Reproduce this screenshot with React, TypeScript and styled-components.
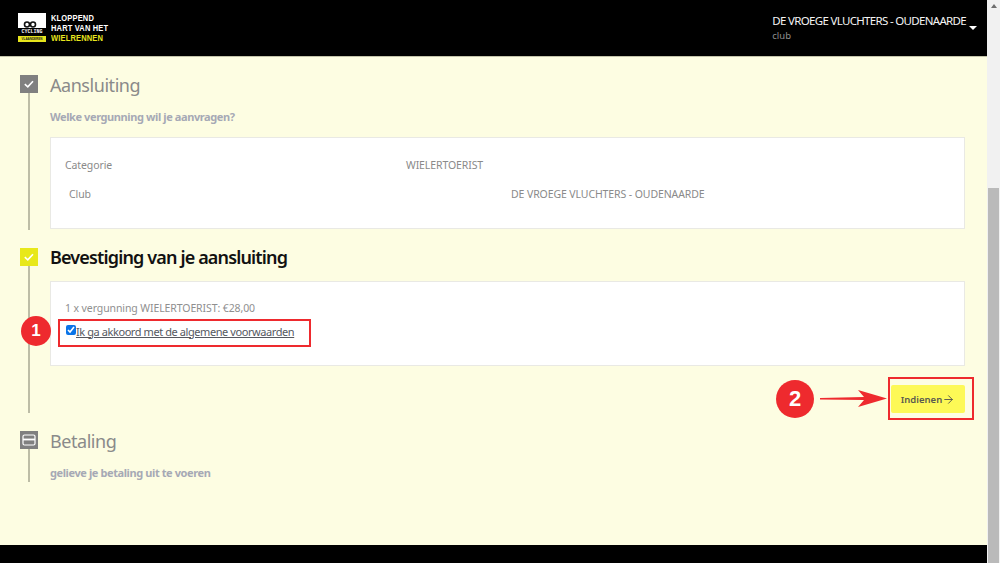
import React from 'react';
import styled, { createGlobalStyle } from 'styled-components';
import { ArrowRight } from 'lucide-react';

const GlobalStyle = createGlobalStyle`
  html, body {
    margin: 0;
    padding: 0;
    height: 100%;
    overflow: hidden;
    background: #fdfde2;
    font-family: "Noto Sans", "Open Sans", sans-serif;
  }
`;

const CheckIcon = () => (
  <svg width="12" height="12" viewBox="0 0 12 12" fill="none">
    <path d="M1.8 6.2 L4.8 8.8 L10 3.2" stroke="#fff" strokeWidth="1.6" />
  </svg>
);

const CardIcon = () => (
  <svg width="14" height="12" viewBox="0 0 14 12" fill="none">
    <rect x="1" y="1" width="12" height="10" rx="1.5" stroke="#fff" strokeWidth="1.2" />
    <rect x="1" y="4.6" width="12" height="1.8" fill="#fff" />
  </svg>
);

const ChainIcon = () => (
  <svg width="14" height="7" viewBox="0 0 14 7" fill="none">
    <circle cx="4" cy="3.5" r="2.5" stroke="#111" strokeWidth="1.6" />
    <circle cx="10" cy="3.5" r="2.5" stroke="#111" strokeWidth="1.6" />
  </svg>
);

const App = () => {
  return (
    <Page>
      <GlobalStyle />
      <Main>
        <Header>
          <Brand>
            <LogoMark>
              <LogoWhite><ChainIcon /></LogoWhite>
              <LogoCycling>CYCLING</LogoCycling>
              <LogoStrip>VLAANDEREN</LogoStrip>
            </LogoMark>
            <Slogan>
              <span>KLOPPEND</span>
              <span>HART VAN HET</span>
              <SloganAccent>WIELRENNEN</SloganAccent>
            </Slogan>
          </Brand>
          <Account>
            <AccountText>
              <AccountName>DE VROEGE VLUCHTERS - OUDENAARDE</AccountName>
              <AccountRole>club</AccountRole>
            </AccountText>
            <Caret />
          </Account>
        </Header>

        <Content>
          <Step $height={173}>
            <Rail>
              <Marker><CheckIcon /></Marker>
              <RailLine />
            </Rail>
            <StepBody>
              <StepTitle>Aansluiting</StepTitle>
              <StepHint>Welke vergunning wil je aanvragen?</StepHint>
              <Card $height={92} $gap={12}>
                <InfoRow $top={19} $left={15} $labelWidth={341}>
                  <span>Categorie</span>
                  <span>WIELERTOERIST</span>
                </InfoRow>
                <InfoRow $top={12} $left={19} $labelWidth={442}>
                  <span>Club</span>
                  <span>DE VROEGE VLUCHTERS - OUDENAARDE</span>
                </InfoRow>
              </Card>
            </StepBody>
          </Step>

          <Step $height={183}>
            <Rail>
              <Marker $active><CheckIcon /></Marker>
              <RailLine />
            </Rail>
            <StepBody>
              <StepTitle $active>Bevestiging van je aansluiting</StepTitle>
              <Card $height={85} $gap={14}>
                <Price>1 x vergunning WIELERTOERIST: €28,00</Price>
                <AgreeRow>
                  <AgreeBox type="checkbox" defaultChecked />
                  <AgreeLink href="#">Ik ga akkoord met de algemene voorwaarden</AgreeLink>
                </AgreeRow>
              </Card>
              <Actions>
                <SubmitButton>Indienen<ArrowRight size={13} strokeWidth={1.8} /></SubmitButton>
              </Actions>
            </StepBody>
          </Step>

          <Step $height={69}>
            <Rail>
              <Marker><CardIcon /></Marker>
              <RailLine />
            </Rail>
            <StepBody>
              <StepTitle>Betaling</StepTitle>
              <StepHint>gelieve je betaling uit te voeren</StepHint>
            </StepBody>
          </Step>
        </Content>

        <Footer />

        <HighlightBox $x={58} $y={319} $w={253} $h={28} />
        <HighlightBox $x={888} $y={377} $w={86} $h={43} />
        <Badge $x={21} $y={316} $size={30} $font={17}>1</Badge>
        <Badge $x={776} $y={380} $size={38} $font={22}>2</Badge>
        <ArrowMark width="68" height="20" viewBox="0 0 68 20">
          <path d="M0 9 L44 8 L38 1 L67 9.5 L38 18 L44 11 L0 10.5 Z" fill="#ee2a2e" />
        </ArrowMark>
      </Main>

      <Scrollbar>
        <ScrollArrow />
        <ScrollThumb />
      </Scrollbar>
    </Page>
  );
};

const Page = styled.div`
  display: flex;
  width: 1000px;
  height: 563px;
  overflow: hidden;
`;

const Main = styled.div`
  position: relative;
  display: flex;
  flex-direction: column;
  width: 987px;
  height: 563px;
  background: #fdfde2;
`;

const Header = styled.header`
  display: flex;
  align-items: flex-start;
  justify-content: space-between;
  box-sizing: border-box;
  height: 57px;
  padding: 13px 10px 0 18px;
  background: #000;
  border-bottom: 1px solid #c4c4aa;
`;

const Brand = styled.div`
  display: flex;
  gap: 5px;
`;

const LogoMark = styled.div`
  display: flex;
  flex-direction: column;
  width: 28px;
`;

const LogoWhite = styled.div`
  display: flex;
  align-items: flex-end;
  justify-content: center;
  box-sizing: border-box;
  height: 15px;
  padding: 0 4px 0 0;
  background: #fff;
`;

const LogoCycling = styled.div`
  height: 7px;
  margin-top: 1px;
  color: #fff;
  font: bold 5px/7px "Liberation Mono", monospace;
  text-align: center;
`;

const LogoStrip = styled.div`
  height: 6px;
  background: #e6e41c;
  color: #222;
  font: bold 3px/6px "Liberation Sans", sans-serif;
  text-align: center;
`;

const Slogan = styled.div`
  display: flex;
  flex-direction: column;
  color: #fff;
  font: bold 9.5px/10px "Liberation Sans", sans-serif;
  letter-spacing: 0.2px;
  white-space: nowrap;
  transform: scaleX(0.79);
  transform-origin: left top;
`;

const SloganAccent = styled.span`
  color: #e8e61e;
`;

const Account = styled.div`
  display: flex;
  align-items: flex-start;
  gap: 3px;
`;

const AccountText = styled.div`
  display: flex;
  flex-direction: column;
`;

const AccountName = styled.span`
  color: #f4f4f4;
  font-size: 11.5px;
  line-height: 16px;
  letter-spacing: -0.68px;
`;

const AccountRole = styled.span`
  color: #8f8f8f;
  font-size: 9.5px;
  line-height: 13px;
`;

const Caret = styled.span`
  width: 0;
  height: 0;
  margin-top: 13px;
  border-left: 4px solid transparent;
  border-right: 4px solid transparent;
  border-top: 4px solid #fff;
`;

const Content = styled.main`
  flex: 1;
  display: flex;
  flex-direction: column;
  padding: 18px 22px 0 20px;
`;

const Step = styled.section<{ $height: number }>`
  display: flex;
  gap: 12px;
  height: ${p => p.$height}px;
`;

const Rail = styled.div`
  display: flex;
  flex-direction: column;
  align-items: center;
  flex: 0 0 18px;
  height: calc(100% - 18px);
`;

const Marker = styled.div<{ $active?: boolean }>`
  display: flex;
  align-items: center;
  justify-content: center;
  flex: 0 0 18px;
  width: 18px;
  background: ${p => (p.$active ? '#e8e81a' : '#808080')};
`;

const RailLine = styled.div`
  flex: 1;
  width: 2px;
  background: #bdbda6;
`;

const StepBody = styled.div`
  flex: 1;
  min-width: 0;
`;

const StepTitle = styled.h2<{ $active?: boolean }>`
  margin: ${p => (p.$active ? '-1px 0 1px' : '0')};
  height: 20px;
  color: ${p => (p.$active ? '#111' : '#8a8a8a')};
  font-size: 18px;
  line-height: 20px;
  font-weight: ${p => (p.$active ? 600 : 400)};
  letter-spacing: ${p => (p.$active ? '-0.85px' : '-0.45px')};
`;

const StepHint = styled.p`
  margin: 14px 0 0;
  color: #a6a9b5;
  font-size: 11px;
  line-height: 16px;
  font-weight: 700;
  letter-spacing: -0.4px;
`;

const Card = styled.div<{ $height: number; $gap: number }>`
  box-sizing: border-box;
  height: ${p => p.$height}px;
  margin-top: ${p => p.$gap}px;
  background: #fff;
  border: 1px solid #e9e9e4;
  color: #8a8a8a;
  font-size: 10.5px;
  letter-spacing: -0.1px;
`;

const InfoRow = styled.div<{ $top: number; $left: number; $labelWidth: number }>`
  display: flex;
  margin-top: ${p => p.$top}px;
  padding-left: ${p => p.$left - 1}px;
  line-height: 17px;

  span:first-child {
    flex: 0 0 ${p => p.$labelWidth}px;
  }
`;

const Price = styled.div`
  margin: 19px 0 0 14px;
  color: #8f8f8f;
  line-height: 14px;
`;

const AgreeRow = styled.label`
  display: flex;
  align-items: center;
  margin: 8px 0 0 15px;
  height: 16px;
`;

const AgreeBox = styled.input`
  width: 10px;
  height: 10px;
  margin: 0 0 2px 0;
  accent-color: #0a74e8;
`;

const AgreeLink = styled.a`
  color: #55585f;
  font-size: 11px;
  letter-spacing: -0.42px;
  text-decoration: underline;
`;

const Actions = styled.div`
  display: flex;
  justify-content: flex-end;
  margin-top: 19px;
`;

const SubmitButton = styled.button`
  display: flex;
  align-items: center;
  justify-content: center;
  width: 74px;
  height: 28px;
  padding: 0;
  border: 0;
  border-radius: 2px;
  background: #fdf956;
  color: #5a5a50;
  font-family: inherit;
  font-size: 9.5px;
  font-weight: 600;
`;

const Footer = styled.footer`
  flex: 0 0 18px;
  background: #000;
`;

const HighlightBox = styled.div<{ $x: number; $y: number; $w: number; $h: number }>`
  position: absolute;
  left: ${p => p.$x}px;
  top: ${p => p.$y}px;
  box-sizing: border-box;
  width: ${p => p.$w}px;
  height: ${p => p.$h}px;
  border: 2px solid #ee2a2e;
`;

const Badge = styled.div<{ $x: number; $y: number; $size: number; $font: number }>`
  position: absolute;
  left: ${p => p.$x}px;
  top: ${p => p.$y}px;
  display: flex;
  align-items: center;
  justify-content: center;
  width: ${p => p.$size}px;
  height: ${p => p.$size}px;
  border-radius: 50%;
  background: #ee2a2e;
  color: #fff;
  font: bold ${p => p.$font}px "Liberation Sans", sans-serif;
`;

const ArrowMark = styled.svg`
  position: absolute;
  left: 820px;
  top: 389px;
`;

const Scrollbar = styled.div`
  display: flex;
  flex-direction: column;
  align-items: center;
  width: 13px;
  height: 563px;
  background: #f1f1f1;
`;

const ScrollArrow = styled.span`
  width: 0;
  height: 0;
  margin-top: 4px;
  border-left: 3px solid transparent;
  border-right: 3px solid transparent;
  border-bottom: 4px solid #6e6e6e;
`;

const ScrollThumb = styled.div`
  flex: 0 0 375px;
  width: 11px;
  margin-top: 180px;
  background: #bababa;
`;

export default App;
